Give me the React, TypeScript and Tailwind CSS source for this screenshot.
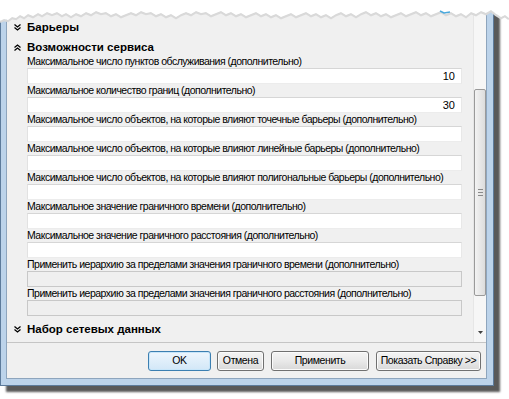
import React from 'react';

type Row = { text: string; value?: string; disabled?: boolean };

const ROWS: Row[] = [
  { text: 'Максимальное число пунктов обслуживания (дополнительно)', value: '10' },
  { text: 'Максимальное количество границ (дополнительно)', value: '30' },
  { text: 'Максимальное число объектов, на которые влияют точечные барьеры (дополнительно)' },
  { text: 'Максимальное число объектов, на которые влияют линейные барьеры (дополнительно)' },
  { text: 'Максимальное число объектов, на которые влияют полигональные барьеры (дополнительно)' },
  { text: 'Максимальное значение граничного времени (дополнительно)' },
  { text: 'Максимальное значение граничного расстояния (дополнительно)' },
  { text: 'Применить иерархию за пределами значения граничного времени (дополнительно)', disabled: true },
  { text: 'Применить иерархию за пределами значения граничного расстояния (дополнительно)', disabled: true },
];

const TEAR =
  '0,21 4,19 8,20 12,17 16,18 20,15 24,17 28,14 33,16 38,13 42,15 47,12 52,14 57,12 62,15 66,13 71,16 76,13 81,15 86,12 91,14 96,11 101,13 106,12 111,15 116,13 121,16 126,14 131,12 136,14 141,11 146,13 151,12 156,15 161,13 166,16 171,14 176,17 181,14 186,12 191,14 196,11 201,13 206,12 211,15 216,13 221,11 226,14 231,12 236,15 241,13 246,16 251,14 256,12 261,15 266,13 271,16 276,14 281,17 286,15 291,13 296,16 301,14 306,12 311,15 316,13 321,16 326,14 331,17 336,14 341,12 346,15 351,13 356,16 361,13 366,11 371,14 376,12 381,15 386,13 391,16 396,14 401,12 406,15 411,13 416,11 421,14 426,12 431,15 436,13 441,11 446,14 451,12 456,15 461,13 466,16 471,12 476,14 481,11 486,13 491,10 496,14 501,17 505,15 509,18';

// double chevron, pointing down or up
function Chevrons({ up }: { up?: boolean }) {
  return (
    <svg width="7" height="7" viewBox="0 0 7 7" className={up ? 'rotate-180' : ''}>
      <path d="M0.5 0.5 L3.5 3 L6.5 0.5 M0.5 3.5 L3.5 6 L6.5 3.5" fill="none" stroke="#000" strokeWidth="1.3" />
    </svg>
  );
}

function Header({ title, up }: { title: string; up?: boolean }) {
  return (
    <div className="flex items-center h-[13px] pl-[7px] gap-[6px]">
      <Chevrons up={up} />
      <span className="font-bold text-[11.5px] tracking-normal leading-[13px] text-black">{title}</span>
    </div>
  );
}

function Button({ label, width, primary }: { label: string; width: string; primary?: boolean }) {
  return (
    <div
      className={`${width} h-[20px] rounded-[3px] border flex items-center justify-center whitespace-nowrap text-[10.5px] tracking-[-0.4px] text-black ${
        primary
          ? 'border-[#3c7fb1] bg-gradient-to-b from-[#eef6fd] to-[#d2e7f7] shadow-[inset_0_0_0_1px_#c8e6fa]'
          : 'border-[#707070] bg-gradient-to-b from-[#f4f4f4] via-[#e9e9e9] to-[#d8d8d8] shadow-[inset_0_0_0_1px_#fbfbfb]'
      }`}
    >
      {label}
    </div>
  );
}

export default function App() {
  return (
    <div className="relative w-[509px] h-[399px] bg-white overflow-hidden font-['Liberation_Sans',sans-serif]">
      {/* window */}
      <div className="w-[494px] h-[386px] bg-[#bcd3ea] border border-[#5d7b9b] pl-[5px] pr-[6px] pb-[6px] flex flex-col shadow-[6px_6px_2px_rgba(0,0,0,0.65)]">
        <div className="flex-1 bg-[#f0f0f0] border-l border-r border-b border-[#8ea5bd] flex flex-col">
          {/* scroll region */}
          <div className="h-[342px] flex border-b border-[#c5c5c5]">
            <div className="flex-1 pt-[20px] text-[10.5px] tracking-[-0.5px] text-black">
              <Header title="Барьеры" />
              <div className="mt-[7px] mb-[1px]">
                <Header title="Возможности сервиса" up />
              </div>
              {ROWS.map((r) => (
                <div key={r.text}>
                  <div className="pl-[20px] h-[13px] leading-[13px] whitespace-nowrap">{r.text}</div>
                  <div
                    className={`ml-[20px] w-[435px] h-[16px] border flex items-center justify-end pr-[6px] text-[11px] tracking-normal ${
                      r.disabled
                        ? 'bg-[#efefef] border-[#c8c8c8]'
                        : 'bg-white border-t-[#d6d6d6] border-l-[#e2e2e2] border-r-[#e8e8e8] border-b-[#ececec]'
                    }`}
                  >
                    {r.value}
                  </div>
                </div>
              ))}
              <div className="mt-[7px]">
                <Header title="Набор сетевых данных" />
              </div>
            </div>
            {/* scrollbar */}
            <div className="w-[13px] bg-[#f6f6f6] border-l border-[#e6e6e6] flex flex-col items-center">
              <div className="mt-[88px] w-[12px] h-[207px] rounded-[2px] border border-[#9a9a9a] bg-gradient-to-r from-[#f3f3f3] to-[#dcdcdc] flex flex-col items-center justify-center gap-[2px]">
                <div className="w-[5px] h-px bg-[#8a8a8a]" />
                <div className="w-[5px] h-px bg-[#8a8a8a]" />
                <div className="w-[5px] h-px bg-[#8a8a8a]" />
              </div>
              <svg width="5" height="3" viewBox="0 0 5 3" className="mt-[35px]">
                <path d="M0 0 H5 L2.5 3 Z" fill="#404040" />
              </svg>
            </div>
          </div>
          {/* buttons */}
          <div className="flex-1 flex justify-end items-start pt-[8px] pr-[5px] gap-[6px]">
            <Button label="OK" width="w-[63px]" primary />
            <Button label="Отмена" width="w-[47px]" />
            <div className="ml-px">
              <Button label="Применить" width="w-[98px]" />
            </div>
            <div className="ml-px">
              <Button label="Показать Справку >>" width="w-[105px]" />
            </div>
          </div>
        </div>
      </div>

      {/* torn top edge */}
      <svg width="509" height="24" viewBox="0 0 509 24" className="absolute left-0 top-0">
        <polyline points={TEAR} fill="none" stroke="#d9d9d9" strokeWidth="2.5" transform="translate(0 1)" />
        <polygon points={`${TEAR} 509,0 0,0`} fill="#fff" />
        <path d="M440 11 L444 13 L450 12" fill="none" stroke="#4aa8dc" strokeWidth="1.5" />
      </svg>
    </div>
  );
}
